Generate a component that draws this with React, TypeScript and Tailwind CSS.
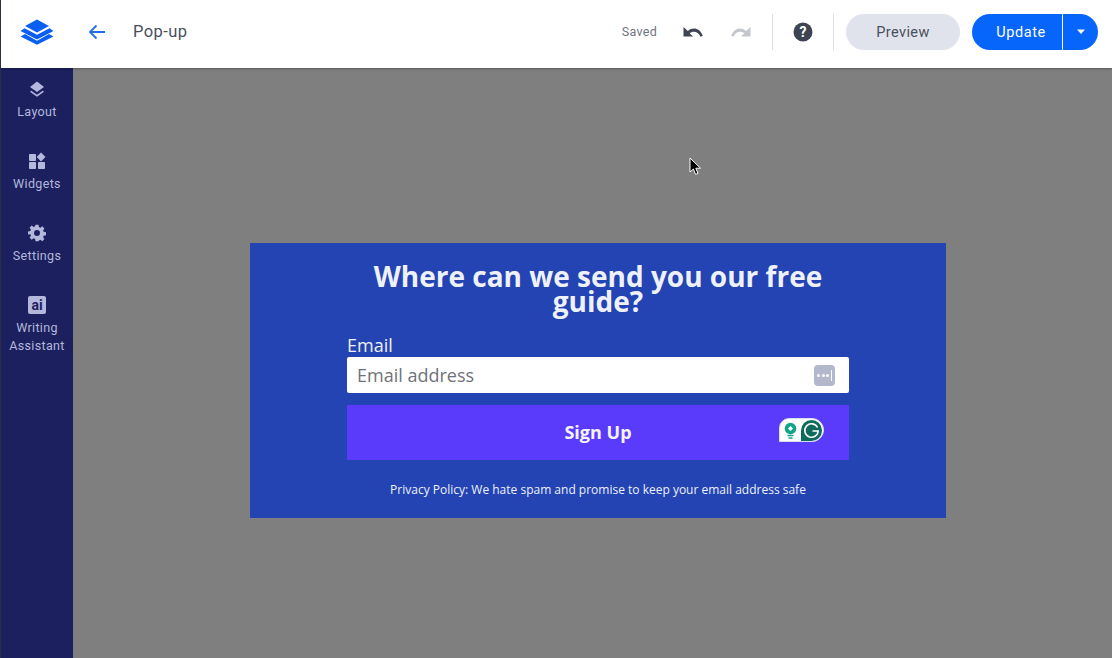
import React from "react";

const plex = "font-['Roboto',sans-serif]";

function Cursor() {
  return (
    <svg width="14" height="20" viewBox="0 0 14 20" className="absolute left-[689px] top-[157px]">
      <path d="M1 1v14l3.4-3 2.2 5.4 2.4-1-2.2-5.2H11.500z" fill="#000" stroke="#fff" strokeWidth="1" />
    </svg>
  );
}

function SideItem({ icon, label }: { icon: React.ReactNode; label: React.ReactNode }) {
  return (
    <div className="flex flex-col items-center h-[72px]">
      <div className="h-[18px] w-[18px] flex items-center justify-center">{icon}</div>
      <div className="mt-[5px] text-[12.500px] leading-[18px] tracking-[0.35px] text-center text-[#b4b8dc]">{label}</div>
    </div>
  );
}

export default function App() {
  return (
    <div className={`relative w-[1112px] h-[658px] overflow-hidden flex flex-col bg-[#7f7f7f] ${plex}`}>
      <header className="relative z-10 h-[68px] shrink-0 bg-white border-l border-l-[#2a3050] shadow-[0_1px_2px_rgba(0,0,0,0.3)] flex items-center pb-[4px]">
        <svg width="34" height="26" viewBox="0 0 34 26" className="ml-[19px]">
          <path d="M17 0.500 29 7 17 13.500 5 7z" fill="#0b5ff0" />
          <path d="M4.500 9.300 0.500 12 17 20.500 33.500 12 29.500 9.300 17 15.800z" fill="#0b5ff0" />
          <path d="M5 15 0.500 17.500 17 25.800 33.500 17.500 29 15 17 21.800z" fill="#0b5ff0" />
        </svg>
        <svg width="18" height="16" viewBox="0 0 18 16" className="ml-[34px]" fill="none" stroke="#1f6fe8" strokeWidth="1.800">
          <path d="M17 8H2M8.500 1.500 2 8l6.500 6.500" />
        </svg>
        <span className="ml-[27px] text-[16.500px] tracking-[0.4px] text-[#4a4f5e]">Pop-up</span>

        <div className="ml-auto flex items-center">
          <span className="text-[12.500px] tracking-[0.3px] text-[#70747f]">Saved</span>
          <svg width="20" height="12" viewBox="0 0 20 12" className="ml-[26px]">
            <path d="M0.500 1v9.500H10L6.600 7.200C8 6.200 9.400 5.700 11 5.700c2.700 0 5 1.800 6.500 5l2.300-1C17.800 5 14.700 2.500 11 2.500 8.800 2.500 6.600 3.300 4.800 5z" fill="#3f4452" />
          </svg>
          <svg width="20" height="12" viewBox="0 0 20 12" className="ml-[28px] -scale-x-100">
            <path d="M0.500 1v9.500H10L6.600 7.200C8 6.200 9.400 5.700 11 5.700c2.700 0 5 1.800 6.500 5l2.300-1C17.800 5 14.700 2.500 11 2.500 8.800 2.500 6.600 3.300 4.800 5z" fill="#c3c6cd" />
          </svg>
          <div className="ml-[21px] w-px h-[36px] bg-[#dcdfe5]" />
          <svg width="20" height="20" viewBox="0 0 20 20" className="ml-[20px]">
            <circle cx="10" cy="10" r="9.500" fill="#3f4452" />
            <text x="10" y="15" textAnchor="middle" fontSize="14" fontWeight="700" fontFamily="Roboto, sans-serif" fill="#fff">?</text>
          </svg>
          <div className="ml-[20px] w-px h-[36px] bg-[#dcdfe5]" />
          <div className="ml-[12px] w-[114px] h-[36px] pt-[1px] rounded-full bg-[#e0e3eb] flex items-center justify-center text-[14.500px] tracking-[0.4px] text-[#4a4f5e]">
            Preview
          </div>
          <div className="ml-[12px] mr-[14px] w-[126px] h-[36px] rounded-full bg-[#0665fb] flex items-center text-white">
            <div className="w-[91px] h-full flex items-center justify-center pl-[8px] pt-[1px] text-[14.500px] tracking-[0.55px] border-r border-r-white">
              Update
            </div>
            <div className="flex-1 flex items-center justify-center">
              <svg width="10" height="6" viewBox="0 0 10 6"><path d="M1 0.500h8L5 5z" fill="#fff" /></svg>
            </div>
          </div>
        </div>
      </header>

      <div className="flex-1 flex min-h-0">
        <aside className="w-[73px] shrink-0 bg-[#1c205f] border-l border-l-[#2a2d4a] pt-[12px] flex flex-col items-center">
          <SideItem
            label="Layout"
            icon={
              <svg width="16" height="16" viewBox="0 0 16 16">
                <path d="M8 0.500 15 6 8 11 1 6z" fill="#b4b8dc" />
                <path d="M2.300 9.700 8 13.700l5.700-4 1.300 1L8 15.800 1 10.700z" fill="#b4b8dc" />
              </svg>
            }
          />
          <SideItem
            label="Widgets"
            icon={
              <svg width="18" height="18" viewBox="0 0 18 18" fill="#b4b8dc">
                <rect x="1" y="2" width="7" height="7" rx="0.800" />
                <rect x="1" y="10" width="7" height="7" rx="0.800" />
                <rect x="10" y="10" width="7" height="7" rx="0.800" />
                <path d="M13 0.500 17.500 5 13 9.500 8.700 5z" />
              </svg>
            }
          />
          <SideItem
            label="Settings"
            icon={
              <svg width="18" height="18" viewBox="0 0 24 24" fill="#b4b8dc">
                <path
                  fillRule="evenodd"
                  d="M10 1h4l.6 3.100 1.900.8 2.600-1.800 2.800 2.800-1.800 2.600.8 1.900 3.100.6v4l-3.100.6-.8 1.900 1.800 2.600-2.800 2.800-2.600-1.800-1.900.8L14 23h-4l-.6-3.100-1.900-.8-2.600 1.800-2.800-2.800 1.800-2.600-.8-1.900L0 14v-4l3.100-.6.8-1.900L2.100 4.900l2.800-2.800 2.600 1.800 1.900-.8zM12 8a4 4 0 1 0 0 8 4 4 0 0 0 0-8z"
                />
              </svg>
            }
          />
          <SideItem
            label={
              <>
                Writing
                <br />
                Assistant
              </>
            }
            icon={
              <div className="w-[18px] h-[18px] rounded-[2px] bg-[#b4b8dc] flex items-center justify-center text-[14px] font-bold leading-none text-[#1c205f]">
                ai
              </div>
            }
          />
        </aside>

        <main className="flex-1 pl-[177px] pt-[175px]">
          <section className="w-[696px] h-[275px] bg-[#2344b2] flex flex-col items-center font-['Open_Sans',sans-serif]">
            <h1 className="mt-[21px] w-[500px] text-center text-[28px] leading-[25px] font-bold text-[#eef1fa]">
              Where can we send you our free guide?
            </h1>
            <div className="w-[502px] mt-[19px]">
              <div className="text-[18px] leading-[24px] h-[24px] text-[#eef1fa]">Email</div>
              <div className="h-[36px] rounded-[2px] bg-white flex items-center pl-[10px] pr-[4px]">
                <span className="text-[18px] text-[#6f7278]">Email address</span>
                <div className="ml-auto mr-[10px] w-[21px] h-[21px] rounded-[4px] bg-[#b3b8cd] flex items-center justify-center gap-[1.500px]">
                  <span className="w-[3px] h-[3px] rounded-full bg-white" />
                  <span className="w-[3px] h-[3px] rounded-full bg-white" />
                  <span className="w-[3px] h-[3px] rounded-full bg-white" />
                  <span className="w-px h-[11px] bg-white" />
                </div>
              </div>
              <div className="relative mt-[12px] h-[55px] bg-[#5b3bfb] flex items-center justify-center text-[18px] font-bold text-[#f4f4fb]">
                Sign Up
                <svg width="46" height="25" viewBox="0 0 46 25" className="absolute left-[431px] top-[13px]">
                  <path d="M11 0.500h23a11.500 11.500 0 0 1 0 23H1.500V10A9.500 9.500 0 0 1 11 .5z" fill="#fff" stroke="#d8dbe8" />
                  <circle cx="12.500" cy="10.500" r="5.800" fill="#12a488" />
                  <path d="M9.500 17.500h6M10.500 20h4" stroke="#12a488" strokeWidth="1.500" />
                  <path d="M12.500 8 15 10.500 12.500 13 10 10.500z" fill="#fff" />
                  <path d="M33.500 2a10.500 10.500 0 0 1 0 21H23V12.500A10.500 10.500 0 0 1 33.500 2z" fill="#0e6a5b" />
                  <path d="M39.500 9.500A6.700 6.700 0 1 0 40.200 13H34.500" fill="none" stroke="#fff" strokeWidth="1.600" />
                </svg>
              </div>
            </div>
            <p className="mt-[21px] text-[12px] leading-[18px] text-[#eef1fa]">
              Privacy Policy: We hate spam and promise to keep your email address safe
            </p>
          </section>
        </main>
      </div>
      <Cursor />
    </div>
  );
}
